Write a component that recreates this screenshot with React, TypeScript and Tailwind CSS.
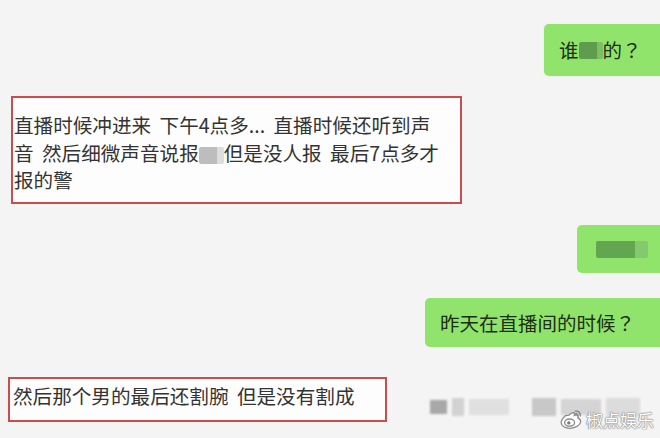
import React from "react";

const font = { fontFamily: '"Noto Sans CJK SC", "Noto Sans", sans-serif' };
const tcFont = { fontFamily: '"Noto Sans CJK TC", "Noto Sans CJK SC", sans-serif' };

function Blot({ w, h, dark, soft }: { w: number; h: number; dark: string; soft: string }) {
  return (
    <span
      className="inline-flex align-middle rounded-[2px] overflow-hidden blur-[0.6px]"
      style={{ width: w, height: h }}
    >
      <span className="flex-[3]" style={{ background: dark }} />
      <span className="flex-[1]" style={{ background: soft }} />
    </span>
  );
}

function WeiboLogo() {
  return (
    <svg width="24" height="22" viewBox="0 0 24 22">
      <g fill="#fff" stroke="#8a8a8a" strokeWidth="1.3">
        <path d="M9.8 7.2c2.3-2.4 5-3.1 5.7-1.8.3.6.1 1.4-.2 2.1 1.6-.6 3.3-.4 3.7.8.3.9-.2 1.6-.1 1.9 1.6.5 2.7 1.6 2.7 3.2 0 3.300-4.6 6.9-10.6 6.9-4.8 0-8.8-2.2-8.8-5.5 0-2.2 1.7-4.9 4.4-7.2z" />
        <ellipse cx="10.6" cy="14.6" rx="5" ry="3.6" />
      </g>
      <circle cx="9.8" cy="14.9" r="1.7" fill="#7a7a7a" />
      <g fill="none" stroke="#8a8a8a" strokeWidth="1.4" strokeLinecap="round">
        <path d="M16.2 3.1c3-.6 5.6 1.7 5.1 4.8" />
        <path d="M16.6 5.6c1.5-.2 2.6.9 2.4 2.3" />
      </g>
    </svg>
  );
}

export default function App() {
  return (
    <div className="relative w-[660px] h-[438px] overflow-hidden bg-[#f4f4f4] text-[#2b2b2b]" style={font}>
      <div className="flex flex-col pt-[24px]">
        {/* 1 */}
        <div className="flex justify-end">
          <div className="h-[52px] w-[116px] flex items-center pl-[15px] rounded-l-[5px] bg-[#91e46b] text-[19.5px] text-[#1c2e13] shadow-[0_0_3px_rgba(0,0,0,0.05)]">
            <span>谁</span>
            <Blot w={24} h={17} dark="#5f9c4d" soft="#7cc063" />
            <span>的</span>
            <span style={tcFont}>？</span>
          </div>
        </div>

        {/* 2 */}
        <div className="mt-[20px] ml-[11px] w-[451px] h-[108px] border-2 border-[#cc4b4b] bg-[#fdfdfd] pt-[13px] pl-[1px] text-[19.6px] leading-[27.5px] text-[#333] [word-spacing:4px]">
          <div className="whitespace-nowrap">直播时候冲进来 下午4点多... 直播时候还听到声</div>
          <div className="whitespace-nowrap">
            音 然后细微声音说报
            <Blot w={25} h={17} dark="#bdbdbd" soft="#dddddd" />
            但是没人报 最后7点多才
          </div>
          <div className="whitespace-nowrap">报的警</div>
        </div>

        {/* 3 */}
        <div className="mt-[21px] flex justify-end">
          <div className="h-[48px] w-[83px] flex items-center pl-[19px] rounded-l-[5px] bg-[#91e46b]">
            <Blot w={52} h={17} dark="#64a650" soft="#86c96a" />
          </div>
        </div>

        {/* 4 */}
        <div className="mt-[25px] flex justify-end">
          <div className="h-[49px] w-[235px] flex items-center pl-[15px] rounded-l-[5px] bg-[#91e46b] text-[19.5px] text-[#1c2e13]">
            <span>昨天在直播间的时候</span>
            <span style={tcFont}>？</span>
          </div>
        </div>

        {/* 5 */}
        <div className="mt-[30px] flex items-start">
          <div className="ml-[8px] w-[379px] h-[45px] border-2 border-[#cc4b4b] bg-[#fdfdfd] pt-[3px] pl-[3px] text-[19.6px] leading-[27.5px] text-[#333] whitespace-nowrap [word-spacing:4px]">
            然后那个男的最后还割腕 但是没有割成
          </div>
          <div className="ml-[43px] mt-[21px] flex items-center gap-[5px] blur-[1.2px]">
            <span className="w-[17px] h-[14px] bg-[#a8a8a8]" />
            <span className="w-[12px] h-[18px] bg-[#d2d2d2]" />
            <span className="w-[40px] h-[16px] bg-[#e0e0e0]" />
            <span className="ml-[18px] w-[24px] h-[18px] bg-[#c8c8c8]" />
            <span className="w-[40px] h-[16px] bg-[#d4d4d4]" />
            <span className="w-[34px] h-[18px] bg-[#dcdcdc]" />
          </div>
        </div>
      </div>

      {/* watermark */}
      <div className="absolute left-[559px] top-[408px] flex items-center gap-[3px]">
        <WeiboLogo />
        <span
          className="text-[17px] leading-none text-white"
          style={{ textShadow: "0 0 1px #777, 0 0 1px #777, 0 0 2px #999" }}
        >
          椒点娱乐
        </span>
      </div>
    </div>
  );
}
